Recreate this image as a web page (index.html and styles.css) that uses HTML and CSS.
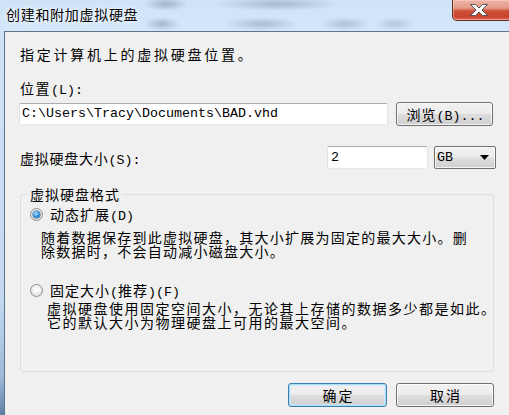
FILE: index.html
```html
<!DOCTYPE html>
<html lang="zh-CN">
<head>
<meta charset="utf-8">
<title>创建和附加虚拟硬盘</title>
<link rel="stylesheet" href="styles.css">
</head>
<body>
<div class="window">
  <header class="titlebar">
    <span class="title">创建和附加虚拟硬盘</span>
    <button class="close" aria-label="关闭">
      <svg width="20" height="14" viewBox="0 0 20 14"><polygon points="1.5,1.5 6.5,1.5 10,5 13.5,1.5 18.5,1.5 13,7 18.5,12.5 13.5,12.5 10,9 6.5,12.5 1.5,12.5 7,7" fill="#fff" stroke="#55575c" stroke-width="1" stroke-linejoin="round"/></svg>
    </button>
  </header>
  <div class="frame">
    <div class="edge"></div>
    <main class="client">
      <p class="intro">指定计算机上的虚拟硬盘位置。</p>
      <p class="lbl">位置<span class="lat">(L):</span></p>
      <div class="row path-row">
        <div class="textbox path"><span class="lat">C:\Users\Tracy\Documents\BAD.vhd</span></div>
        <button class="btn browse">浏览<span class="lat">(B)...</span></button>
      </div>
      <div class="row size-row">
        <span class="lbl size-lbl">虚拟硬盘大小<span class="lat">(S):</span></span>
        <div class="textbox size"><span class="lat">2</span></div>
        <div class="select"><span class="lat">GB</span><svg width="9" height="5" viewBox="0 0 9 5"><polygon points="0,0 9,0 4.5,5" fill="#000"/></svg></div>
      </div>
      <fieldset class="group">
        <legend>虚拟硬盘格式</legend>
        <div class="option first"><span class="radio checked"></span><span>动态扩展<span class="lat">(D)</span></span></div>
        <p class="desc">随着数据保存到此虚拟硬盘，其大小扩展为固定的最大大小。删<br>除数据时，不会自动减小磁盘大小。</p>
        <div class="option second"><span class="radio"></span><span>固定大小<span class="lat">(</span>推荐<span class="lat">)(F)</span></span></div>
        <p class="desc second-desc">虚拟硬盘使用固定空间大小，无论其上存储的数据多少都是如此。<br>它的默认大小为物理硬盘上可用的最大空间。</p>
      </fieldset>
      <div class="actions">
        <button class="btn default ok">确定</button>
        <button class="btn cancel">取消</button>
      </div>
    </main>
  </div>
</div>
</body>
</html>
```

FILE: styles.css
```css
* { box-sizing: border-box; }
html, body { margin: 0; padding: 0; }
body {
  width: 509px;
  height: 415px;
  overflow: hidden;
  font-family: "Noto Sans CJK SC", sans-serif;
  font-size: 14px;
  letter-spacing: 1px;
  color: #000;
  background: #cde2f6;
}
p { margin: 0; }
.lat {
  font-family: "Liberation Mono", monospace;
  font-size: 13.33px;
  letter-spacing: 0;
  line-height: 0;
}
.window {
  width: 509px;
  height: 415px;
  display: flex;
  flex-direction: column;
}
.titlebar {
  height: 31px;
  flex: none;
  display: flex;
  align-items: flex-start;
  background:
    radial-gradient(ellipse 22px 7px at 166px 4px, rgba(105,125,150,.45), rgba(105,125,150,0)),
    radial-gradient(ellipse 62px 7px at 278px 4px, rgba(105,125,150,.40), rgba(105,125,150,0)),
    radial-gradient(ellipse 18px 7px at 162px 24px, rgba(105,125,150,.45), rgba(105,125,150,0)),
    radial-gradient(ellipse 38px 7px at 262px 24px, rgba(105,125,150,.40), rgba(105,125,150,0)),
    radial-gradient(ellipse 26px 7px at 345px 24px, rgba(105,125,150,.35), rgba(105,125,150,0)),
    radial-gradient(ellipse 20px 7px at 395px 24px, rgba(105,125,150,.30), rgba(105,125,150,0)),
    linear-gradient(#cfe3f7, #d4e7f9);
}
.title {
  margin: 6px 0 0 6px;
  font-size: 14px;
  line-height: 16px;
  letter-spacing: 0.7px;
  text-shadow: 0 0 6px rgba(255,255,255,.95), 0 0 3px rgba(255,255,255,.9);
  flex: 1;
}
.close {
  width: 66px;
  height: 21px;
  margin-right: -9px;
  padding: 0;
  border: 1px solid #6a2c20;
  border-top: 0;
  border-radius: 0 0 4px 5px;
  background: linear-gradient(#eeb3a6 0%, #e59a89 40%, #cf4f37 55%, #c8432d 85%, #d9735f 100%);
  box-shadow: inset 0 0 0 1px rgba(255,220,210,.45);
  display: flex;
  align-items: center;
  justify-content: center;
}
.close svg { margin-left: -12px; margin-top: -1px; }
.frame {
  flex: 1;
  display: flex;
}
.edge {
  width: 4px;
  flex: none;
  background: linear-gradient(#cfe3f7 0%, #c3d9f1 70%, #9db9d9 90%, #5f80a8 100%);
}
.client {
  flex: 1;
  background: #f0f0f0;
  border-top: 1px solid #62748a;
  border-left: 1px solid #62748a;
  padding: 0 15px 0 15px;
  display: flex;
  flex-direction: column;
}
.intro { margin-top: 14px; line-height: 16px; letter-spacing: 2.75px; }
.lbl { line-height: 16px; letter-spacing: 1.5px; }
p.lbl { margin-top: 18px; }
.row { display: flex; align-items: center; }
.path-row { margin-top: 6px; height: 24px; gap: 8px; margin-left: -1px; }
.textbox {
  background: #fff;
  border: 1px solid #e2e3ea;
  border-top-color: #abadb3;
  border-bottom-color: #e3e9ef;
  border-radius: 2px;
  display: flex;
  align-items: center;
  padding-left: 2px;
}
.path { width: 369px; height: 22px; }
.btn {
  font-family: inherit;
  font-size: 14px;
  letter-spacing: 2px;
  color: #000;
  line-height: 16px;
  padding: 0 0 0 2px;
  border: 1px solid #707070;
  border-radius: 3px;
  background: linear-gradient(#f2f2f2 0%, #ebebeb 48%, #dddddd 52%, #cfcfcf 100%);
  box-shadow: inset 0 0 0 1px rgba(255,255,255,.75);
}
.browse { width: 97px; height: 24px; letter-spacing: 1px; }
.size-row { margin-top: 20px; height: 23px; }
.size-lbl { flex: 1; letter-spacing: 0.75px; }
.size { width: 101px; height: 23px; padding-left: 3px; }
.select {
  width: 62px;
  height: 23px;
  margin-left: 6px;
  margin-right: -2px;
  border: 1px solid #707070;
  border-radius: 2px;
  background: linear-gradient(#f2f2f2 0%, #ebebeb 48%, #dddddd 52%, #cfcfcf 100%);
  box-shadow: inset 0 0 0 1px rgba(255,255,255,.75);
  display: flex;
  align-items: center;
  justify-content: space-between;
  padding: 0 6px 0 2px;
}
.group {
  margin: 17px 0 0 0;
  padding: 0 0 42px 0;
  width: 474px;
  min-width: 0;
  border: 1px solid #d5dfe5;
  border-radius: 3px;
}
.group legend {
  margin-left: 7px;
  padding: 0 2px;
  line-height: 16px;
  letter-spacing: 1px;
}
.option {
  display: flex;
  align-items: center;
  gap: 7px;
  height: 16px;
  line-height: 16px;
  margin-left: 9px;
  letter-spacing: 1px;
}
.option.first { margin-top: 4px; }
.option.second { margin-top: 24px; }
.desc {
  margin: 8px 0 0 20px;
  line-height: 14px;
  letter-spacing: 1.25px;
  white-space: nowrap;
}
.desc.second-desc { margin: 3px 0 0 26px; letter-spacing: 1.5px; }
.radio {
  position: relative;
  width: 13px;
  height: 13px;
  flex: none;
  border-radius: 50%;
  border: 1px solid #8f8f8f;
  background: radial-gradient(circle at 50% 40%, #ffffff 0%, #f0f0f0 45%, #cfcfcf 100%);
}
.radio.checked::after {
  content: "";
  position: absolute;
  left: 2px;
  top: 2px;
  width: 7px;
  height: 7px;
  border-radius: 50%;
  background: radial-gradient(circle at 40% 35%, #b9e6ff 0%, #3d9be0 45%, #105a9c 100%);
  box-shadow: 0 0 0 0.5px #1d4f80;
}
.actions {
  margin-top: 11px;
  display: flex;
  justify-content: flex-end;
  gap: 9px;
}
.ok { width: 99px; height: 24px; }
.cancel { width: 98px; height: 24px; }
.btn.default {
  border-color: #3c7fb1;
  box-shadow: inset 0 0 0 1px #a9dcf6, inset 0 0 0 2px rgba(200,235,252,.6);
}
```
